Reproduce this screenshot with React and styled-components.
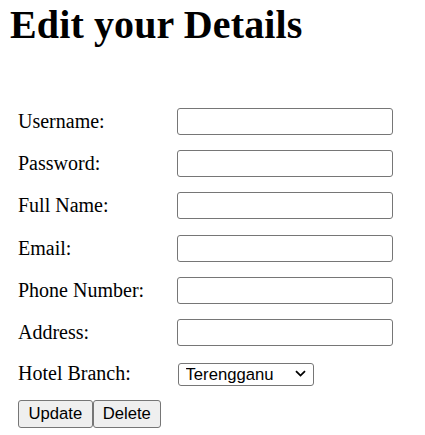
import React from 'react';
import styled, { createGlobalStyle } from 'styled-components';

const GlobalStyle = createGlobalStyle`
    body {
        margin: 0;
        background: #fff;
        color: #000;
        font-family: "Liberation Serif", "Times New Roman", serif;
        font-size: 20px;
    }
`;

const Page = styled.div`
    padding: 1.5px 0 0 10px;
`;

const Title = styled.h1`
    margin: 0;
    font-size: 40px;
    line-height: 46px;
    font-weight: bold;
    letter-spacing: 0.12px;
`;

const Form = styled.form`
    margin-top: 60px;
    padding-left: 8px;
    display: flex;
    flex-direction: column;
    align-items: flex-start;
    gap: 15.4px;
`;

const Row = styled.div`
    display: grid;
    grid-template-columns: 159px auto;
    align-items: center;
`;

const Label = styled.label`
    line-height: 23px;
`;

const Input = styled.input`
    box-sizing: border-box;
    width: 216px;
    height: 27px;
    margin: 0;
    padding: 1px 3px;
    border: 1px solid #767676;
    border-radius: 3px;
    background: #fff;
    font-family: "Liberation Sans", Arial, sans-serif;
    font-size: 16.67px;
`;

const SelectWrap = styled.div`
    position: relative;
    margin-left: 1px;
    width: 136px;
    height: 22.5px;
`;

const Select = styled.select`
    appearance: none;
    box-sizing: border-box;
    width: 100%;
    height: 100%;
    margin: 0;
    padding: 0 24px 0 6.5px;
    border: 1px solid #767676;
    border-radius: 3px;
    background: #fff;
    color: #000;
    font-family: "Liberation Sans", Arial, sans-serif;
    font-size: 16.67px;
`;

const Chevron = styled.svg`
    position: absolute;
    right: 8.5px;
    top: 8px;
    width: 11px;
    height: 7px;
    pointer-events: none;
`;

const Buttons = styled.div`
    display: flex;
`;

const Button = styled.button`
    box-sizing: border-box;
    height: 27.3px;
    margin: 0;
    padding: 0 ${props => props.$pad || 9.5}px;
    border: 1px solid #767676;
    border-radius: 3px;
    background: #efefef;
    color: #000;
    font-family: "Liberation Sans", Arial, sans-serif;
    font-size: 16.67px;
`;

const fields = [
    { label: 'Username:', type: 'text' },
    { label: 'Password:', type: 'password' },
    { label: 'Full Name:', type: 'text' },
    { label: 'Email:', type: 'text' },
    { label: 'Phone Number:', type: 'text' },
    { label: 'Address:', type: 'text' },
];

export default function App() {
    return (
        <Page>
            <GlobalStyle />
            <Title>Edit your Details</Title>
            <Form onSubmit={e => e.preventDefault()}>
                {fields.map(f => (
                    <Row key={f.label}>
                        <Label>{f.label}</Label>
                        <Input type={f.type} />
                    </Row>
                ))}
                <Row>
                    <Label>Hotel Branch:</Label>
                    <SelectWrap>
                        <Select defaultValue="Terengganu">
                            <option>Terengganu</option>
                            <option>Kuala Lumpur</option>
                            <option>Penang</option>
                        </Select>
                        <Chevron viewBox="0 0 11 7">
                            <path d="M1 1.2 L5.5 5.6 L10 1.2" fill="none" stroke="#000" strokeWidth="1.8" />
                        </Chevron>
                    </SelectWrap>
                </Row>
                <Buttons>
                    <Button type="button">Update</Button>
                    <Button type="button" $pad={9}>Delete</Button>
                </Buttons>
            </Form>
        </Page>
    );
}
